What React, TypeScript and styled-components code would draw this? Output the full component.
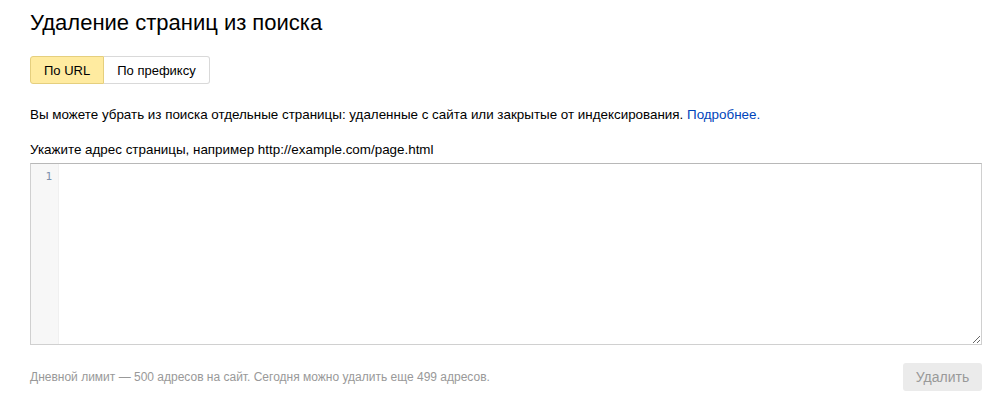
import React, { useState } from 'react'
import styled, { createGlobalStyle } from 'styled-components'

const GlobalStyle = createGlobalStyle`
  html, body {
    margin: 0;
    padding: 0;
    background: #fff;
  }
  body {
    font-family: Arial, "Liberation Sans", Helvetica, sans-serif;
    color: #000;
  }
`

const Page = styled.div`
  width: 1000px;
  height: 416px;
  box-sizing: border-box;
  padding: 9px 18px 0 30px;
  display: flex;
  flex-direction: column;
`

const Title = styled.h1`
  margin: 0;
  font-size: 22px;
  font-weight: normal;
  line-height: 28px;
  color: #000;
`

const Tabs = styled.div`
  display: flex;
  margin-top: 19px;
`

const Tab = styled.button<{ $active?: boolean }>`
  height: 28px;
  padding: 0 ${p => (p.$active ? '13px' : '13px')};
  font-family: inherit;
  font-size: 13px;
  color: #000;
  cursor: pointer;
  background: ${p => (p.$active ? '#ffeba0' : '#fff')};
  border: 1px solid ${p => (p.$active ? '#e5cf7e' : '#d9d9d9')};
  border-left-width: ${p => (p.$active ? '1px' : '0')};
  border-radius: ${p => (p.$active ? '3px 0 0 3px' : '0 3px 3px 0')};
`

const Text = styled.p`
  margin: 0;
  font-size: 13.4px;
  line-height: 16px;
`

const Info = styled(Text)`
  margin-top: 23px;
`

const Hint = styled(Text)`
  margin-top: 19px;
`

const Link = styled.a`
  color: #0044bb;
  text-decoration: none;
`

const Editor = styled.div`
  margin-top: 5px;
  height: 182px;
  display: flex;
  border: 1px solid #d0d0d0;
  border-top-color: #b8b8b8;
  box-sizing: border-box;
`

const Gutter = styled.div`
  width: 28px;
  background: #f7f7f7;
  border-right: 1px solid #f0f0f0;
  box-sizing: border-box;
  padding: 6px 6px 0 0;
  text-align: right;
  font-family: "DejaVu Sans Mono", monospace;
  font-size: 11px;
  color: #7d90ab;
`

const Area = styled.textarea`
  flex: 1;
  border: 0;
  outline: none;
  resize: both;
  padding: 6px 4px;
  font-family: "DejaVu Sans Mono", monospace;
  font-size: 12px;
  background: #fff;
`

const Footer = styled.div`
  margin-top: 18px;
  display: flex;
  align-items: center;
  justify-content: space-between;
`

const Note = styled.span`
  font-size: 12px;
  color: #999;
`

const DeleteButton = styled.button`
  width: 79px;
  height: 28px;
  border: 0;
  border-radius: 3px;
  background: #ebebeb;
  color: #999;
  font-family: inherit;
  font-size: 14px;
  cursor: default;
`

export default function App() {
  const [mode, setMode] = useState<'url' | 'prefix'>('url')
  const [value, setValue] = useState('')

  return (
    <>
      <GlobalStyle />
      <Page>
        <Title>Удаление страниц из поиска</Title>
        <Tabs>
          <Tab $active={mode === 'url'} onClick={() => setMode('url')}>По URL</Tab>
          <Tab $active={mode === 'prefix'} onClick={() => setMode('prefix')}>По префиксу</Tab>
        </Tabs>
        <Info>
          Вы можете убрать из поиска отдельные страницы: удаленные с сайта или закрытые от индексирования.{' '}
          <Link href="#">Подробнее.</Link>
        </Info>
        <Hint>Укажите адрес страницы, например http://example.com/page.html</Hint>
        <Editor>
          <Gutter>1</Gutter>
          <Area value={value} onChange={e => setValue(e.target.value)} />
        </Editor>
        <Footer>
          <Note>Дневной лимит — 500 адресов на сайт. Сегодня можно удалить еще 499 адресов.</Note>
          <DeleteButton disabled={!value}>Удалить</DeleteButton>
        </Footer>
      </Page>
    </>
  )
}
